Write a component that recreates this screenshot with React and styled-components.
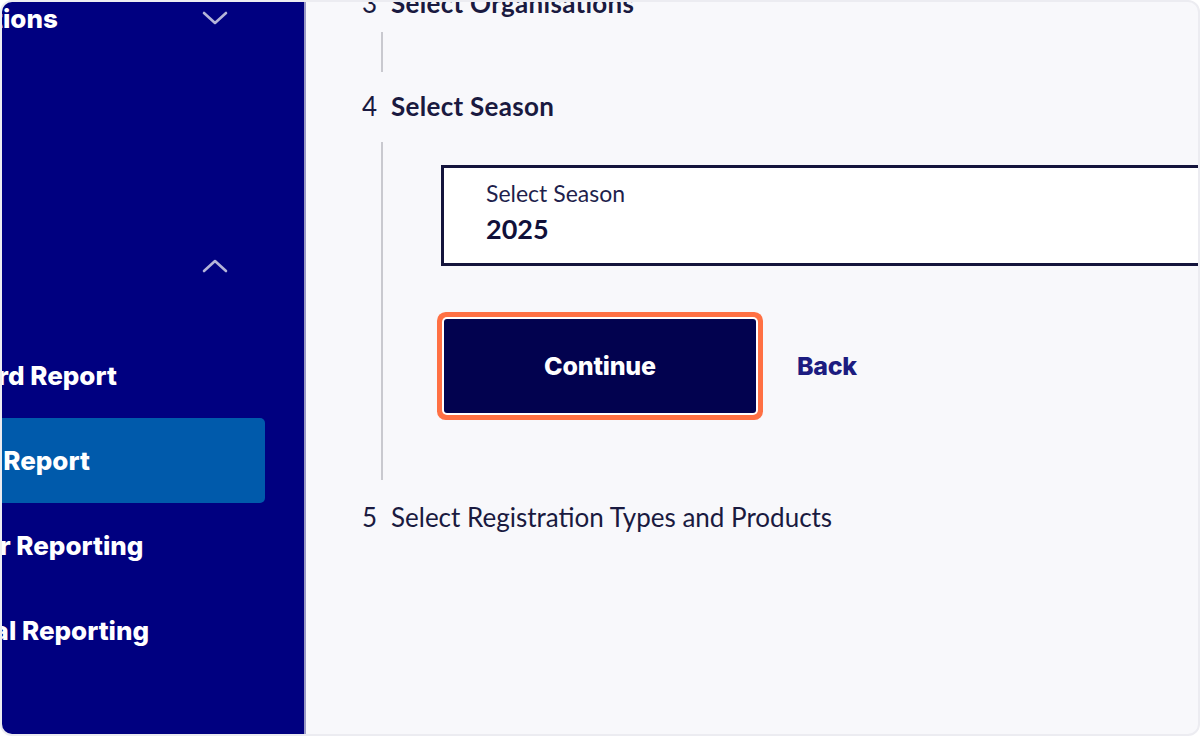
import React from "react";
import styled, { createGlobalStyle } from "styled-components";

const GlobalStyle = createGlobalStyle`
  html, body {
    margin: 0;
    padding: 0;
    background: #ffffff;
    height: 100%;
  }
  #root {
    height: 100%;
  }
  * {
    box-sizing: border-box;
  }
`;

const Frame = styled.div`
  height: 736px;
  width: 1200px;
  display: flex;
  border: 2px solid #ececf1;
  border-radius: 12px;
  overflow: hidden;
  background: #f8f8fb;
`;

const Sidebar = styled.aside`
  width: 304px;
  flex-shrink: 0;
  background: #000080;
  border-right: 2px solid #9a9ac4;
  overflow: hidden;
  font-family: Inter, "Liberation Sans", sans-serif;
  color: #ffffff;
`;

const Nav = styled.nav`
  margin-left: -118px;
  width: 381px;
  display: flex;
  flex-direction: column;
`;

const NavHeader = styled.div`
  height: 32px;
  margin-top: ${(p) => p.$gap || 0}px;
  display: flex;
  align-items: center;
  justify-content: space-between;
  padding-right: 37px;
  font-size: 26px;
  font-weight: 800;
  white-space: nowrap;
`;

const SubList = styled.ul`
  list-style: none;
  margin: 51px 0 0;
  padding: 0;
`;

const SubItem = styled.li`
  height: 85px;
  display: flex;
  align-items: center;
  font-size: 26px;
  font-weight: 800;
  white-space: nowrap;
  border-radius: 0 5px 5px 0;
  background: ${(p) => (p.$active ? "#005aab" : "transparent")};
`;

const Chevron = ({ up }) => (
  <svg width="26" height="14" viewBox="0 0 26 14" fill="none">
    <polyline
      points={up ? "2,12 13,2 24,12" : "2,2 13,12 24,2"}
      stroke="#b4b4d8"
      strokeWidth="2.6"
      strokeLinecap="round"
      strokeLinejoin="round"
    />
  </svg>
);

const Main = styled.main`
  flex: 1;
  overflow: hidden;
  padding-left: 56px;
  font-family: Lato, "Liberation Sans", sans-serif;
  color: #1a1a40;
`;

const StepHead = styled.div`
  height: 32px;
  display: flex;
  align-items: center;
  font-size: 26px;
  line-height: 32px;
  margin-top: ${(p) => p.$top || 0}px;
  font-weight: ${(p) => (p.$bold ? 700 : 400)};
  letter-spacing: ${(p) => (p.$bold ? "0.3px" : "0")};
`;

const StepNum = styled.span`
  width: 29px;
  font-weight: 400;
`;

const StepBody = styled.div`
  margin-left: 19px;
  border-left: 2px solid #c9c9cf;
  margin-top: ${(p) => p.$top}px;
  min-height: ${(p) => p.$height || 0}px;
  padding: ${(p) => p.$pad || "0"};
`;

const SelectBox = styled.div`
  margin-right: -80px;
  background: #ffffff;
  border: 3px solid #14143c;
  padding: 12px 42px 19px;
  display: flex;
  flex-direction: column;
  gap: 8px;
`;

const SelectLabel = styled.span`
  font-size: 23px;
  line-height: 26px;
  color: #1f1f4c;
`;

const SelectValue = styled.span`
  font-size: 27px;
  line-height: 30px;
  font-weight: 700;
  color: #10103a;
`;

const Actions = styled.div`
  display: flex;
  align-items: center;
  gap: 41px;
  margin-top: 53px;
  padding-left: 3px;
`;

const PrimaryButton = styled.button`
  width: 312px;
  height: 94px;
  border: none;
  border-radius: 3px;
  background: #02024f;
  color: #ffffff;
  font-family: Inter, "Liberation Sans", sans-serif;
  font-size: 25px;
  font-weight: 800;
  letter-spacing: -0.2px;
  box-shadow: 0 0 0 2px #ffffff, 0 0 0 7px #ff7043;
  cursor: pointer;
`;

const LinkButton = styled.button`
  border: none;
  background: none;
  padding: 0;
  color: #1c1c80;
  font-family: Inter, "Liberation Sans", sans-serif;
  font-size: 25px;
  font-weight: 800;
  letter-spacing: -0.3px;
  cursor: pointer;
`;

const reports = [
  { label: "Dashboard Report" },
  { label: "Payment Report", active: true },
  { label: "Volunteer Reporting" },
  { label: "Additional Reporting" },
];

export default function App() {
  return (
    <>
      <GlobalStyle />
      <Frame>
        <Sidebar>
          <Nav>
            <NavHeader>
              <span>Competitions</span>
              <Chevron />
            </NavHeader>
            <NavHeader $gap={216}>
              <span>Reports</span>
              <Chevron up />
            </NavHeader>
            <SubList>
              {reports.map((r) => (
                <SubItem key={r.label} $active={r.active}>
                  {r.label}
                </SubItem>
              ))}
            </SubList>
          </Nav>
        </Sidebar>
        <Main>
          <StepHead $top={-15} $bold>
            <StepNum>3</StepNum>
            Select Organisations
          </StepHead>
          <StepBody $top={13} $height={40} />
          <StepHead $top={18} $bold>
            <StepNum>4</StepNum>
            Select Season
          </StepHead>
          <StepBody $top={20} $pad="23px 0 67px 58px">
            <SelectBox>
              <SelectLabel>Select Season</SelectLabel>
              <SelectValue>2025</SelectValue>
            </SelectBox>
            <Actions>
              <PrimaryButton>Continue</PrimaryButton>
              <LinkButton>Back</LinkButton>
            </Actions>
          </StepBody>
          <StepHead $top={21}>
            <StepNum>5</StepNum>
            Select Registration Types and Products
          </StepHead>
        </Main>
      </Frame>
    </>
  );
}
